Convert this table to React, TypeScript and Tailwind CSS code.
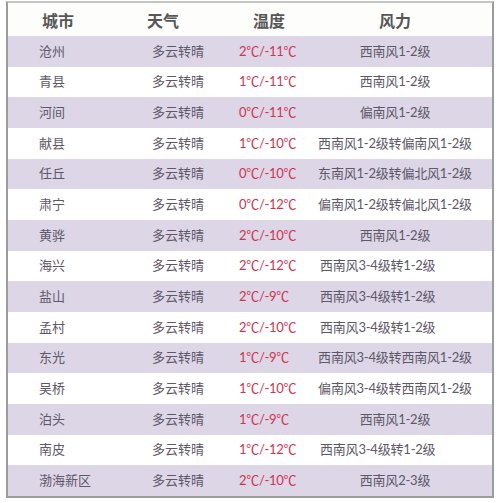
import React from "react";

const rows: [string, string, string, string, boolean][] = [
  ["沧州", "多云转晴", "2℃/-11℃", "西南风1-2级", false],
  ["青县", "多云转晴", "1℃/-11℃", "西南风1-2级", false],
  ["河间", "多云转晴", "0℃/-11℃", "偏南风1-2级", false],
  ["献县", "多云转晴", "1℃/-10℃", "西南风1-2级转偏南风1-2级", false],
  ["任丘", "多云转晴", "0℃/-10℃", "东南风1-2级转偏北风1-2级", false],
  ["肃宁", "多云转晴", "0℃/-12℃", "偏南风1-2级转偏北风1-2级", false],
  ["黄骅", "多云转晴", "2℃/-10℃", "西南风1-2级", false],
  ["海兴", "多云转晴", "2℃/-12℃", "西南风3-4级转1-2级", true],
  ["盐山", "多云转晴", "2℃/-9℃", "西南风3-4级转1-2级", true],
  ["孟村", "多云转晴", "2℃/-10℃", "西南风3-4级转1-2级", true],
  ["东光", "多云转晴", "1℃/-9℃", "西南风3-4级转西南风1-2级", false],
  ["吴桥", "多云转晴", "1℃/-10℃", "偏南风3-4级转西南风1-2级", false],
  ["泊头", "多云转晴", "1℃/-9℃", "西南风1-2级", false],
  ["南皮", "多云转晴", "1℃/-12℃", "西南风3-4级转1-2级", true],
  ["渤海新区", "多云转晴", "2℃/-10℃", "西南风2-3级", false],
];

export default function App() {
  return (
    <div className="w-[500px] h-[503px] bg-white overflow-hidden pt-[1px] pl-[6px]" style={{ fontFamily: '"Lato", "Noto Sans CJK SC", sans-serif' }}>
      <div className="w-[488px] h-[497px] border-2 border-[#9c9c9c] border-t-[#c4c4c4] flex flex-col">
        <div className="h-[33px] shrink-0 grid grid-cols-[114px_100px_94px_158px_1fr] items-center bg-[#fdfdfb] text-[16px] font-semibold text-[#575757] pt-[2px]">
          <div className="pl-[34px]">城市</div>
          <div className="pl-[25px]">天气</div>
          <div className="text-center">温度</div>
          <div className="text-center">风力</div>
          <div />
        </div>
        <div className="flex-1 grid grid-rows-[repeat(15,1fr)]">
          {rows.map((r, i) => (
            <div
              key={i}
              className={
                "grid grid-cols-[114px_100px_94px_158px_1fr] items-center text-[13px] text-[#5e5868] " +
                (i % 2 === 0 ? "bg-[#dcd6e7]" : "bg-white")
              }
            >
              <div className="pl-[31px] whitespace-nowrap">{r[0]}</div>
              <div className="pl-[30px] whitespace-nowrap">{r[1]}</div>
              <div className="pl-[17px] text-[#d2334f] text-[13px] whitespace-nowrap tracking-[-0.3px]">{r[2]}</div>
              <div className={(r[4] ? "text-left pl-[4px] " : "text-center ") + "whitespace-nowrap tracking-[-0.2px]"}>{r[3]}</div>
              <div />
            </div>
          ))}
        </div>
      </div>
    </div>
  );
}
